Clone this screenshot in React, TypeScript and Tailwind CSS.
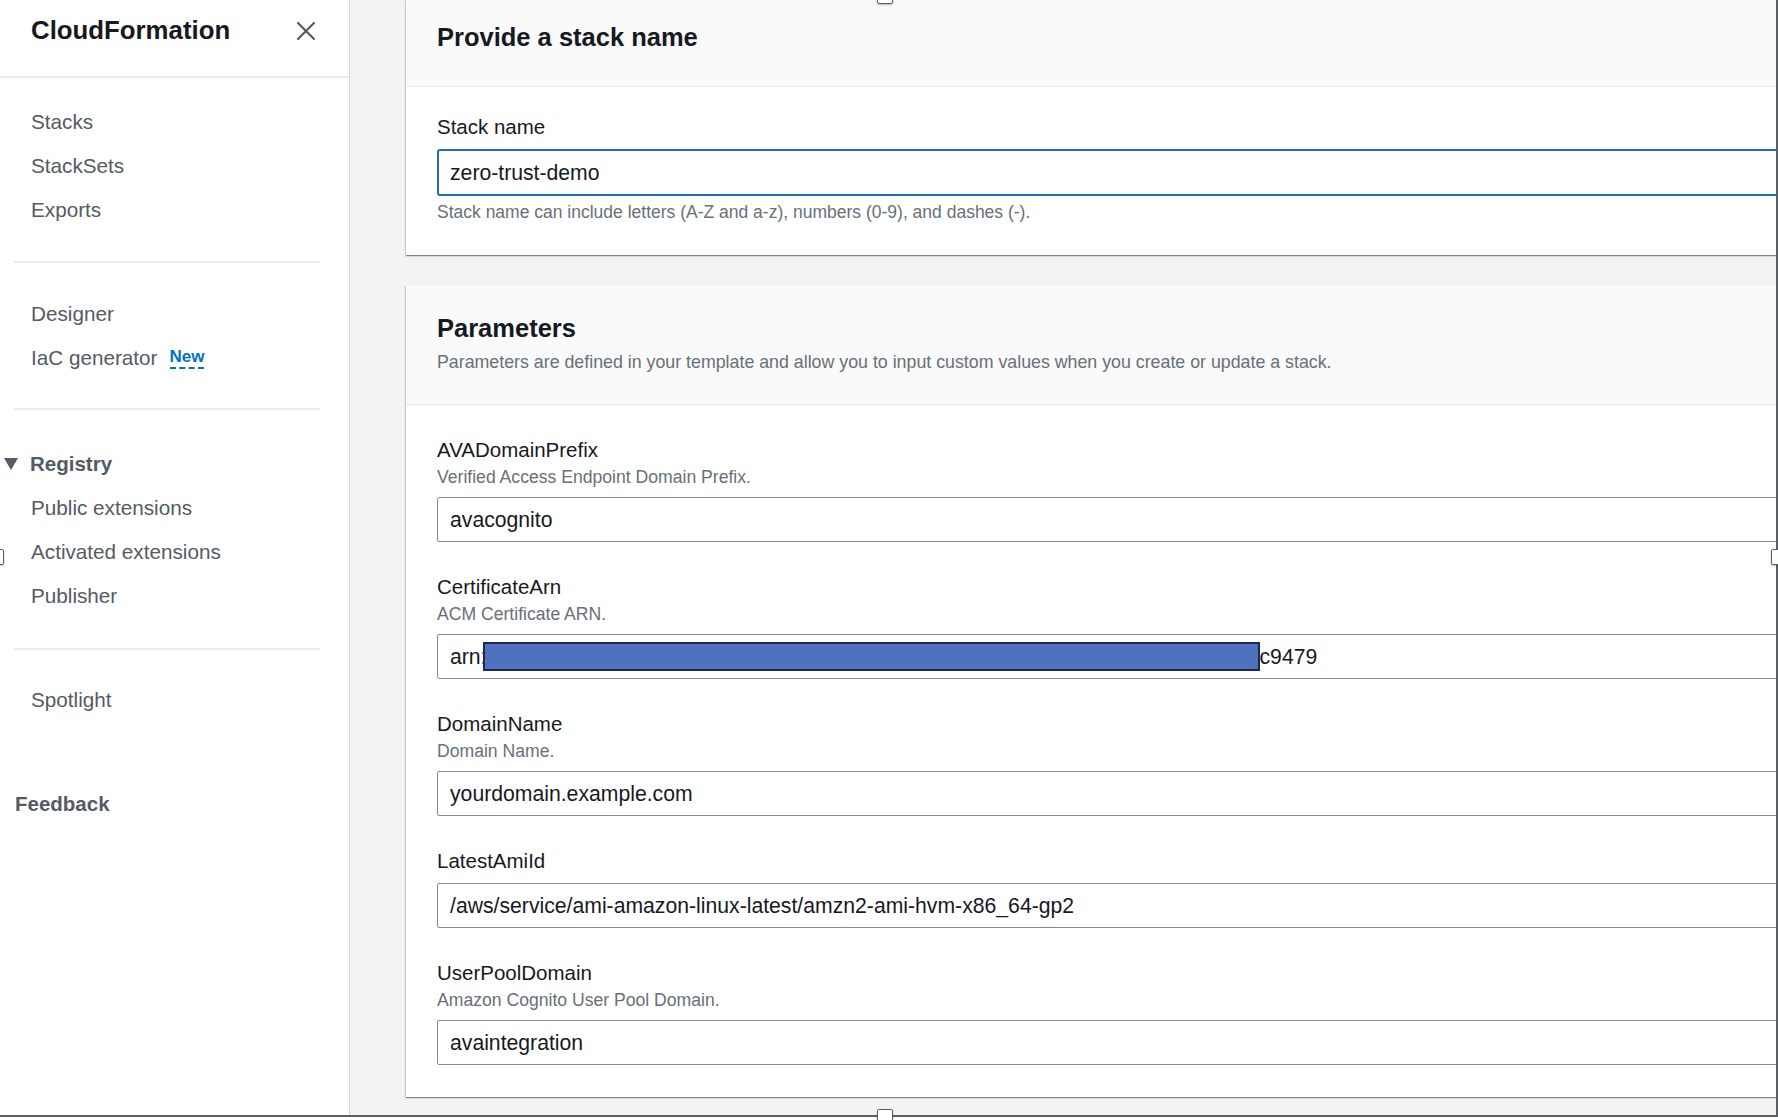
import React from "react";

const navTop = ["Stacks", "StackSets", "Exports"];
const registry = ["Public extensions", "Activated extensions", "Publisher"];

type Param = { name: string; desc?: string; value: React.ReactNode };

const params: Param[] = [
  { name: "AVADomainPrefix", desc: "Verified Access Endpoint Domain Prefix.", value: "avacognito" },
  {
    name: "CertificateArn",
    desc: "ACM Certificate ARN.",
    value: (
      <span className="flex items-center">
        <span>arn:</span>
        <span className="relative ml-[-4px] h-[29px] w-[777px] border-2 border-[#1c2a4d] bg-[#4f71be]" />
        <span>c9479</span>
      </span>
    ),
  },
  { name: "DomainName", desc: "Domain Name.", value: "yourdomain.example.com" },
  { name: "LatestAmiId", value: "/aws/service/ami-amazon-linux-latest/amzn2-ami-hvm-x86_64-gp2" },
  { name: "UserPoolDomain", desc: "Amazon Cognito User Pool Domain.", value: "avaintegration" },
];

function NavItem({ label, children }: { label: string; children?: React.ReactNode }) {
  return (
    <div className="flex h-[44px] items-center pl-[31px] text-[20.7px] text-[#545b64]">
      <span>{label}</span>
      {children}
    </div>
  );
}

function Divider() {
  return <div className="ml-[14px] h-[2px] w-[306px] bg-[#eaeded]" />;
}

function Sidebar() {
  return (
    <aside className="flex h-full w-[350px] shrink-0 flex-col border-r border-[#d5dbdb] bg-white">
      <div className="flex h-[78px] items-start justify-between border-b-2 border-[#eaeded] pl-[31px] pr-[33px] pt-[15px]">
        <div className="text-[25.8px] font-bold leading-[30px] text-[#16191f]">CloudFormation</div>
        <svg width="20" height="20" viewBox="0 0 20 20" className="mt-[6px]">
          <path d="M2 2 L18 18 M18 2 L2 18" stroke="#545b64" strokeWidth="2.2" strokeLinecap="round" />
        </svg>
      </div>

      <div className="mt-[22px]">
        {navTop.map((l) => (
          <NavItem key={l} label={l} />
        ))}
      </div>
      <div className="mt-[29px]">
        <Divider />
      </div>
      <div className="mt-[29px]">
        <NavItem label="Designer" />
        <NavItem label="IaC generator">
          <span className="ml-[12px] border-b-2 border-dashed border-[#0073bb] text-[17px] font-bold leading-[20px] text-[#0073bb]">
            New
          </span>
        </NavItem>
      </div>
      <div className="mt-[28px]">
        <Divider />
      </div>
      <div className="mt-[32px]">
        <div className="flex h-[44px] items-center pl-[4px] text-[20.5px] font-bold text-[#545b64]">
          <svg width="14" height="12" viewBox="0 0 14 12">
            <path d="M0 0 H14 L7 12 Z" fill="#545b64" />
          </svg>
          <span className="ml-[12px]">Registry</span>
        </div>
        {registry.map((l) => (
          <NavItem key={l} label={l} />
        ))}
      </div>
      <div className="mt-[30px]">
        <Divider />
      </div>
      <div className="mt-[28px]">
        <NavItem label="Spotlight" />
      </div>
      <div className="mt-[60px] flex h-[44px] items-center pl-[15px] text-[20.5px] font-bold text-[#545b64]">
        Feedback
      </div>
    </aside>
  );
}

const cardShadow =
  "shadow-[0_1px_1px_0_rgba(0,28,36,0.3),1px_1px_1px_0_rgba(0,28,36,0.15),-1px_1px_1px_0_rgba(0,28,36,0.15)]";

function Field({ p }: { p: Param }) {
  return (
    <div>
      <div className="text-[20.5px] leading-[24px] text-[#16191f]">{p.name}</div>
      {p.desc && <div className="mt-[5px] text-[17.6px] leading-[20px] text-[#687078]">{p.desc}</div>}
      <div className="mt-[10px] flex h-[45px] items-center rounded-[2px] border border-[#868b91] bg-white pl-[12px] text-[21.2px] text-[#16191f]">
        {p.value}
      </div>
    </div>
  );
}

function Handle({ className }: { className: string }) {
  return (
    <div
      className={
        "absolute h-[16px] w-[16px] rounded-[2px] border-[1.5px] border-[#5b5f64] bg-white shadow-[0_1px_2px_rgba(0,0,0,0.25)] " +
        className
      }
    />
  );
}

export default function App() {
  return (
    <div
      className="relative h-[1120px] w-[1778px] overflow-hidden bg-white"
      style={{ fontFamily: '"Liberation Sans", Arial, sans-serif' }}
    >
      <div className="flex h-[1117px] w-[1778px] overflow-hidden border-b-2 border-r-2 border-[#5a5f66]">
        <Sidebar />
        <main className="flex min-w-0 flex-1 flex-col gap-[30px] overflow-hidden bg-[#f2f3f3] pl-[56px]">
          <section className={"mr-[-20px] bg-white " + cardShadow}>
            <div className="h-[87px] border-b border-[#eaeded] bg-[#fafafa] pl-[31px] pt-[22px]">
              <h2 className="text-[25.5px] font-bold leading-[30px] text-[#16191f]">Provide a stack name</h2>
            </div>
            <div className="pb-[33px] pl-[31px] pt-[28px]">
              <div className="text-[20.5px] leading-[24px] text-[#16191f]">Stack name</div>
              <div className="mt-[10px] flex h-[47px] items-center rounded-[3px] border-2 border-[#1f6dc0] bg-white pl-[11px] text-[21.2px] text-[#16191f]">
                zero-trust-demo
              </div>
              <div className="mt-[6px] text-[17.5px] leading-[20px] text-[#687078]">
                Stack name can include letters (A-Z and a-z), numbers (0-9), and dashes (-).
              </div>
            </div>
          </section>

          <section className={"mr-[-20px] bg-white " + cardShadow}>
            <div className="border-b border-[#eaeded] bg-[#fafafa] pb-[31px] pl-[31px] pt-[28px]">
              <h2 className="text-[25.5px] font-bold leading-[30px] text-[#16191f]">Parameters</h2>
              <div className="mt-[8px] text-[17.8px] leading-[22px] text-[#687078]">
                Parameters are defined in your template and allow you to input custom values when you create or update a stack.
              </div>
            </div>
            <div className="flex flex-col gap-[33px] pb-[32px] pl-[31px] pt-[33px]">
              {params.map((p) => (
                <Field key={p.name} p={p} />
              ))}
            </div>
          </section>
        </main>
      </div>

      <Handle className="left-[877px] top-[-12px]" />
      <Handle className="left-[877px] top-[1109px]" />
      <Handle className="left-[1771px] top-[549px]" />
      <Handle className="left-[-12px] top-[549px]" />
    </div>
  );
}
